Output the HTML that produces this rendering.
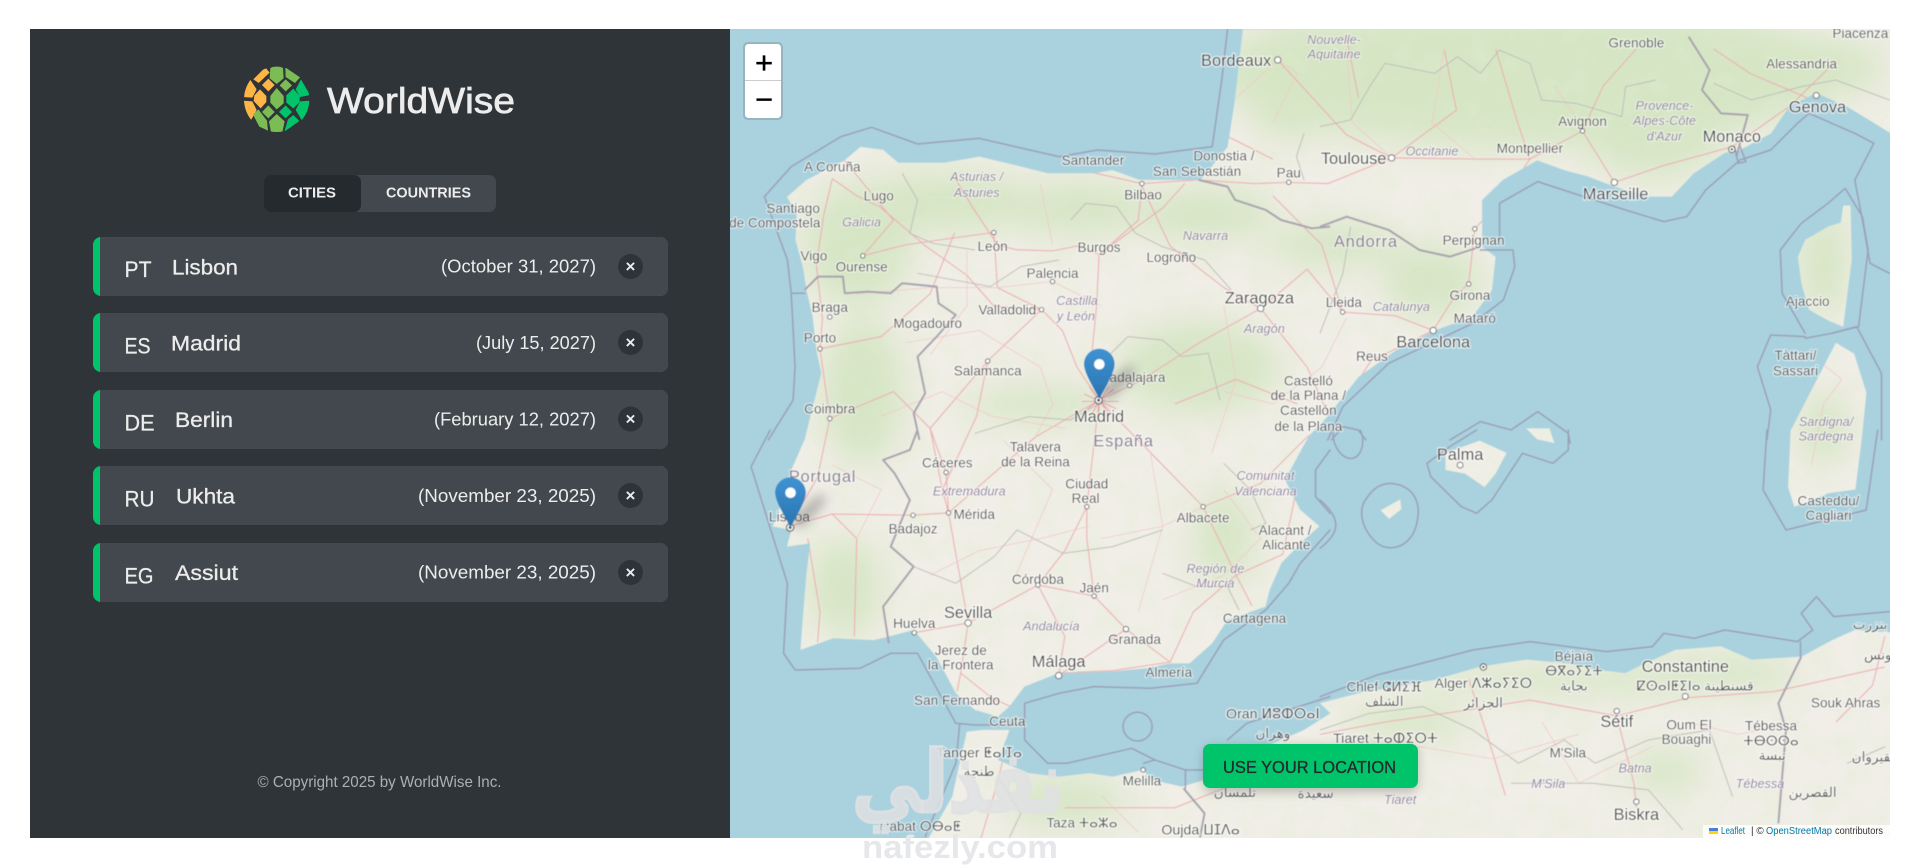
<!DOCTYPE html>
<html lang="en">
<head>
<meta charset="utf-8">
<title>WorldWise</title>
<style>
html,body{margin:0;padding:0;background:#fff;width:1919px;height:866px;overflow:hidden}
svg{display:block}
text{font-family:"Liberation Sans","DejaVu Sans",sans-serif}
.c text{font-size:11.1px;fill:#505050;text-anchor:middle;paint-order:stroke;stroke:rgba(255,255,255,.6);stroke-width:1.8px;stroke-linejoin:round}
.b text{font-size:13.4px;fill:#444;text-anchor:middle;paint-order:stroke;stroke:rgba(255,255,255,.65);stroke-width:2px;stroke-linejoin:round}
.t text{font-size:11.6px;fill:#484848;text-anchor:middle;paint-order:stroke;stroke:rgba(255,255,255,.65);stroke-width:2px;stroke-linejoin:round}
.r text{font-size:10.4px;font-style:italic;fill:#8d7f9e;text-anchor:middle;paint-order:stroke;stroke:rgba(255,255,255,.5);stroke-width:1.6px}
.n text{font-size:13.5px;fill:#847a93;text-anchor:middle;letter-spacing:.6px;paint-order:stroke;stroke:rgba(255,255,255,.5);stroke-width:1.8px}
.mar{fill:none;stroke:#9aa1b8;stroke-width:1.5;vector-effect:non-scaling-stroke;stroke-linejoin:round;stroke-linecap:round}
.bor{fill:none;stroke:#a9a3ae;stroke-width:2;vector-effect:non-scaling-stroke;stroke-linejoin:round}
.reg{fill:none;stroke:#bfbeb9;stroke-width:1;vector-effect:non-scaling-stroke}
.rd{fill:none;stroke:#eeaab0;stroke-width:.85;stroke-linejoin:round}
.rd2{fill:none;stroke:#f2c6c6;stroke-width:.6;stroke-linejoin:round}
.code{font-size:22px;fill:#ececec;stroke:#ececec;stroke-width:.25}
.name{font-size:21.6px;fill:#ececec;stroke:#ececec;stroke-width:.3}
.date{font-size:18.6px;fill:#ececec;text-anchor:end}
.x{font-size:17px;fill:#ececec;font-weight:700;text-anchor:middle}
</style>
</head>
<body>
<svg xmlns="http://www.w3.org/2000/svg" width="1919" height="866" viewBox="0 0 1919 866">
<defs>
<clipPath id="mapclip"><rect x="730" y="29" width="1160" height="809"/></clipPath>
<clipPath id="logoclip"><circle cx="140" cy="148" r="98"/></clipPath>
<clipPath id="landclip">
<path d="M1015.5,24 1009,82 1003,120 981,147 956,147 931,147 909,139 893.6,141.6 856,141.6 834,136 800,128 771.6,133 734,133 721.6,122.5 703,120 690,131 659,147 643,161 651,174 650,196 656,218 659,237 664,259 667,286 671,305 657.5,359 646.5,384 634,425 631,430 646.5,433 643,446.6 662,444 659,468.4 656,504 654,531 681,521.5 715,523 746.6,514.7 765,536.5 781,566.4 796.6,580 815.4,585.5 825,577 837,561 865,550 909,548.7 937,546 956,542 972,542 990.5,525.6 1003,506.5 1034,495.6 1037.4,482 1047,460 1065.6,441 1078,430 1062.4,416.6 1050,392 1069,357 1085,340 1110,308 1141,286 1172,270 1203,259 1219,237 1222,210 1211,201.5 1211,163.4 1228,147 1256,131 1278,139 1297,144 1319,152.5 1347,160.7 1366,160.7 1384,141.6 1409,125 1422,122.5 1447,109 1462,87 1484,76 1509,87 1550,112 1550,20Z"/>
<path d="M1078.5,574.6 1110,566.4 1141,561 1172,555.5 1209.6,544.7 1247,539 1281.4,542 1303,547 1328,550 1344,542 1369,531 1406,528 1431,539 1472,536.5 1497,523 1515.5,514.7 1550,517 1550,700 755,700 759,684.4 778,651 784,623.6 790,597.8 803,596.4 825,596.4 815.4,621 840.4,631.8 865.4,634.5 890.4,631.8 909,634.5 934,629 940.5,637 965.5,642.7 1003,631.8 1034,610 1065.6,596.4 1087,582.8Z"/>
<path d="M1506,168 1512,168 1513,212 1506,267 1494,262 1478,253 1472,232 1469,210 1475,196 1494,185 1504,182Z"/>
<path d="M1500,280 1515,289 1525,321 1521,360 1516,400 1494,403 1482,408 1466,414 1461,398 1463,352Z"/>
<path d="M1181,370 1209,360 1231,370 1222,387 1213,398 1197,387 1181,384Z"/>
<path d="M1247,350 1266,350 1270,362 1256,359Z"/>
<path d="M1128,417 1144,408 1145,416 1135,424Z"/>
</clipPath>
<filter id="bl8" x="-20%" y="-20%" width="140%" height="140%"><feGaussianBlur stdDeviation="13"/></filter>
<filter id="bl4" x="-40%" y="-40%" width="180%" height="180%"><feGaussianBlur stdDeviation="5"/></filter>
<filter id="soft" x="-2%" y="-2%" width="104%" height="104%"><feGaussianBlur stdDeviation=".42"/></filter>
<filter id="mot" x="0" y="0" width="100%" height="100%">
<feTurbulence type="fractalNoise" baseFrequency=".05" numOctaves="3" seed="7"/>
<feColorMatrix values="0 0 0 0 .74  0 0 0 0 .84  0 0 0 0 .64  0 0 0 2.4 -1.05"/>
</filter>
<linearGradient id="pin" x1="0" y1="0" x2="0" y2="1"><stop offset="0" stop-color="#3f93d2"/><stop offset="1" stop-color="#2a73b0"/></linearGradient>
<g id="marker">
<path d="M1,36 L24,15 Q29,13 29,19 L8,41Z" fill="#444" opacity=".5" filter="url(#bl4)" transform="translate(12,0)"/>
<path d="M12.5,0C5.6,0 0,5.6 0,12.5C0,19.5 8.2,32.5 12.5,41C16.8,32.5 25,19.5 25,12.5C25,5.6 19.4,0 12.5,0Z" fill="url(#pin)"/>
<circle cx="12.5" cy="12.6" r="4.3" fill="#fff"/>
</g>
</defs>

<!-- SIDEBAR -->
<rect x="30" y="29" width="700.5" height="809" fill="#2f3439"/>

<!-- logo -->
<g transform="translate(230,50) scale(.3333)" clip-path="url(#logoclip)">
<g fill="#ffb545">
<polygon points="70,88 106,52 119,68 86,99"/>
<polygon points="60,88 80,118 67,143 38,141 44,110"/>
<polygon points="38,152 67,154 80,180 62,212 46,187"/>
<polygon points="90,118 109,138 109,156 92,175 71,153 73,136"/>
<polygon points="115,86 134,105 115,124 96,105"/>
</g>
<g fill="#7cbc55">
<polygon points="140,46 121,54 119,85 140,102 161,85 159,54"/>
<polygon points="166,52 210,82 195,99 167,81"/>
<polygon points="167,88 186,106 167,124 149,106"/>
<polygon points="140,114 161,138 161,160 140,178 121,158 121,138"/>
<polygon points="115,166 134,186 115,205 96,186"/>
<polygon points="69,194 85,178 111,212 114,242 88,230"/>
<polygon points="140,192 164,214 157,247 123,247 117,214"/>
</g>
<g fill="#00c46a">
<polygon points="213,88 240,135 210,141 197,118"/>
<polygon points="190,116 209,138 209,156 190,175 169,158 169,136"/>
<polygon points="240,152 210,154 197,180 215,210 235,186"/>
<polygon points="167,166 186,186 167,205 147,186"/>
<polygon points="208,213 163,245 174,208 190,195"/>
</g>
</g>
<text x="327" y="113" font-size="36" fill="#ececec" stroke="#ececec" stroke-width=".7" textLength="188" lengthAdjust="spacingAndGlyphs">WorldWise</text>

<!-- tabs -->
<rect x="264" y="175" width="232" height="37" rx="7" fill="#42484d"/>
<path d="M271,175H354a7,7 0 0 1 7,7V205a7,7 0 0 1 -7,7H271a7,7 0 0 1 -7,-7V182a7,7 0 0 1 7,-7Z" fill="#242a2e"/>
<text x="288" y="197.5" font-size="14.4" font-weight="700" fill="#ececec" textLength="48" lengthAdjust="spacingAndGlyphs">CITIES</text>
<text x="386" y="197.5" font-size="14.4" font-weight="700" fill="#ececec" textLength="85" lengthAdjust="spacingAndGlyphs">COUNTRIES</text>

<!-- city rows -->
<g>
<rect x="93" y="237" width="575" height="59" rx="8" fill="#00c46a"/><path d="M100,237H660a8,8 0 0 1 8,8V288a8,8 0 0 1 -8,8H100Z" fill="#42484d"/>
<text class="code" x="124.5" y="277" textLength="27" lengthAdjust="spacingAndGlyphs">PT</text>
<text class="name" x="172" y="274.5" textLength="66" lengthAdjust="spacingAndGlyphs">Lisbon</text>
<text class="date" x="596" y="272.5" textLength="155" lengthAdjust="spacingAndGlyphs">(October 31, 2027)</text>
<circle cx="630.5" cy="266.5" r="12.5" fill="#2d3439"/><text class="x" x="630.5" y="272">×</text>
</g>
<g>
<rect x="93" y="313" width="575" height="59" rx="8" fill="#00c46a"/><path d="M100,313H660a8,8 0 0 1 8,8V364a8,8 0 0 1 -8,8H100Z" fill="#42484d"/>
<text class="code" x="124.5" y="353.5" textLength="26" lengthAdjust="spacingAndGlyphs">ES</text>
<text class="name" x="171" y="350.5" textLength="70" lengthAdjust="spacingAndGlyphs">Madrid</text>
<text class="date" x="596" y="349" textLength="120" lengthAdjust="spacingAndGlyphs">(July 15, 2027)</text>
<circle cx="630.5" cy="342.5" r="12.5" fill="#2d3439"/><text class="x" x="630.5" y="348">×</text>
</g>
<g>
<rect x="93" y="390" width="575" height="59" rx="8" fill="#00c46a"/><path d="M100,390H660a8,8 0 0 1 8,8V441a8,8 0 0 1 -8,8H100Z" fill="#42484d"/>
<text class="code" x="124.5" y="430.5" textLength="30" lengthAdjust="spacingAndGlyphs">DE</text>
<text class="name" x="175" y="427" textLength="58" lengthAdjust="spacingAndGlyphs">Berlin</text>
<text class="date" x="596" y="425.5" textLength="162" lengthAdjust="spacingAndGlyphs">(February 12, 2027)</text>
<circle cx="630.5" cy="419" r="12.5" fill="#2d3439"/><text class="x" x="630.5" y="424.5">×</text>
</g>
<g>
<rect x="93" y="466" width="575" height="59" rx="8" fill="#00c46a"/><path d="M100,466H660a8,8 0 0 1 8,8V517a8,8 0 0 1 -8,8H100Z" fill="#42484d"/>
<text class="code" x="124.5" y="506.5" textLength="30" lengthAdjust="spacingAndGlyphs">RU</text>
<text class="name" x="176" y="503.5" textLength="59" lengthAdjust="spacingAndGlyphs">Ukhta</text>
<text class="date" x="596" y="502" textLength="178" lengthAdjust="spacingAndGlyphs">(November 23, 2025)</text>
<circle cx="630.5" cy="495.5" r="12.5" fill="#2d3439"/><text class="x" x="630.5" y="501">×</text>
</g>
<g>
<rect x="93" y="543" width="575" height="59" rx="8" fill="#00c46a"/><path d="M100,543H660a8,8 0 0 1 8,8V594a8,8 0 0 1 -8,8H100Z" fill="#42484d"/>
<text class="code" x="124.5" y="583.5" textLength="29" lengthAdjust="spacingAndGlyphs">EG</text>
<text class="name" x="175" y="580" textLength="63" lengthAdjust="spacingAndGlyphs">Assiut</text>
<text class="date" x="596" y="578.5" textLength="178" lengthAdjust="spacingAndGlyphs">(November 23, 2025)</text>
<circle cx="630.5" cy="572.5" r="12.5" fill="#2d3439"/><text class="x" x="630.5" y="578">×</text>
</g>

<text x="257.5" y="787" font-size="16" fill="#aab0b3" textLength="244" lengthAdjust="spacingAndGlyphs">© Copyright 2025 by WorldWise Inc.</text>

<!-- MAP -->
<g clip-path="url(#mapclip)">
<rect x="730" y="29" width="1160" height="809" fill="#aad2de"/>
<g filter="url(#soft)">

<g transform="scale(1.2239)">
<!-- land -->
<g clip-path="url(#landclip)">
<rect x="590" y="15" width="965" height="690" fill="#f0eee6"/>
<g filter="url(#bl8)" fill="#d2e4bf" opacity=".85">
<ellipse cx="1250" cy="60" rx="260" ry="62"/>
<ellipse cx="1055" cy="65" rx="40" ry="50"/>
<ellipse cx="1350" cy="85" rx="70" ry="60"/>
<ellipse cx="1480" cy="55" rx="60" ry="25"/>
<ellipse cx="770" cy="165" rx="80" ry="24"/>
<ellipse cx="880" cy="170" rx="60" ry="22"/>
<ellipse cx="985" cy="175" rx="55" ry="22"/>
<ellipse cx="1090" cy="200" rx="55" ry="18"/>
<ellipse cx="1170" cy="230" rx="40" ry="30"/>
<ellipse cx="700" cy="200" rx="45" ry="50"/>
<ellipse cx="705" cy="320" rx="34" ry="60"/>
<ellipse cx="980" cy="300" rx="65" ry="38"/>
<ellipse cx="1000" cy="440" rx="24" ry="40"/>
<ellipse cx="690" cy="480" rx="30" ry="40"/>
<ellipse cx="1490" cy="215" rx="20" ry="44"/>
<ellipse cx="1490" cy="350" rx="20" ry="30"/>
<ellipse cx="1280" cy="555" rx="120" ry="11"/>
<ellipse cx="1400" cy="550" rx="70" ry="14"/>
<ellipse cx="870" cy="655" rx="50" ry="20"/>
<ellipse cx="1150" cy="590" rx="50" ry="14"/>
<ellipse cx="1360" cy="630" rx="30" ry="16"/>
<ellipse cx="850" cy="330" rx="60" ry="14"/>
</g>
<rect x="590" y="15" width="965" height="690" filter="url(#mot)" opacity=".3"/>
<!-- roads -->
<g class="rd">
<polyline points="898,327 892,290 896,250 898,208 880,201 860,205 830,204 815,200 795,170 780,145"/>
<polyline points="898,208 925,188 950,170 968,150"/>
<polyline points="898,208 930,180 933,152"/>
<polyline points="812,190 815,235 851,253 807,295 798,340 770,400 775,419"/>
<polyline points="851,253 868,270 880,300 898,327"/>
<polyline points="680,146 700,160 719,169 755,200 790,225 812,250 851,253"/>
<polyline points="673,176 667,217 672,260 670,285 678,342 668,390 645,430"/>
<polyline points="680,146 673,176"/>
<polyline points="705,209 740,200 775,195 812,190"/>
<polyline points="898,327 930,312 980,280 1030,252 1068,220 1097,255 1140,258 1171,270"/>
<polyline points="1171,270 1190,240 1200,232 1205,187 1230,160 1250,130 1293,107 1319,149"/>
<polyline points="1293,107 1310,70 1337,40"/>
<polyline points="1319,149 1360,135 1415,120 1462,87 1500,50"/>
<polyline points="1250,130 1210,130 1137,129 1100,110 1044,49"/>
<polyline points="1137,129 1085,150 1053,149 1025,150 978,147 933,150 893,141"/>
<polyline points="1030,252 1000,235 956,201 933,152"/>
<polyline points="1030,252 1068,300 1088,345 1068,357"/>
<polyline points="1171,270 1120,295 1088,345"/>
<polyline points="1068,357 1030,395 983,414 950,380 898,327"/>
<polyline points="983,414 1010,470 1048,453 1068,360"/>
<polyline points="1010,470 1023,495"/>
<polyline points="1010,470 975,500 956,541"/>
<polyline points="956,541 920,514 894,487 848,478 791,509"/>
<polyline points="920,514 865,552 870,520 848,478"/>
<polyline points="894,487 888,440 888,414 898,327"/>
<polyline points="848,478 870,450 888,414"/>
<polyline points="791,509 775,419 773,386 760,350 807,295"/>
<polyline points="791,509 747,517 715,523"/>
<polyline points="791,509 785,550 782,565"/>
<polyline points="785,550 810,570 825,577 865,550 909,548 956,541"/>
<polyline points="645,430 680,420 746,421 775,419 846,357 898,327"/>
<polyline points="660,440 670,500 668,525"/>
<polyline points="698,520 700,440 680,420"/>
<polyline points="1078.5,600 1131,590 1200,580 1250,572 1321,585 1380,570 1450,565 1540,545"/>
<polyline points="1200,555 1215,600 1230,650"/>
<polyline points="1321,585 1335,640 1337,660"/>
<polyline points="825,596 815,640 800,690"/>
<polyline points="870,660 960,660 1010,640 1070,610"/>
<polyline points="1540,520 1530,560 1500,590"/>
<polyline points="690,131 730,180 705,209"/>
<polyline points="670,285 720,275 760,240 780,190"/>
<polyline points="678,342 730,320 760,350 770,400"/>
<polyline points="960,330 1010,310 1060,330"/>
<polyline points="1040,160 1080,200 1097,255"/>
<polyline points="1000,110 1040,130"/>
<polyline points="1180,40 1190,90 1137,129"/>
<polyline points="1400,40 1430,60 1500,90"/>
<polyline points="1100,30 1110,80"/>
<polyline points="1222,40 1240,100 1250,130"/>
</g>
<g class="rd2">
<polyline points="700,240 760,235 815,235 860,230 900,250"/>
<polyline points="740,280 800,270 850,300 860,330 846,357"/>
<polyline points="1000,320 1040,330 1080,300 1100,260"/>
<polyline points="900,440 950,430 983,414"/>
<polyline points="720,340 770,320 810,340 870,350"/>
<polyline points="760,470 800,450 850,440 890,430"/>
<polyline points="1100,40 1105,100 1137,129"/>
<polyline points="1180,40 1170,100 1205,130"/>
<polyline points="1000,400 1030,440 1000,470 950,490"/>
<polyline points="1040,100 1060,60 1044,49 1010,80"/>
<polyline points="1480,380 1490,330 1505,310 1480,290"/>
<polyline points="1100,640 1160,610 1220,620 1290,600"/>
<polyline points="680,380 720,400 700,440"/>
<polyline points="820,360 860,400 830,470"/>
<polyline points="940,370 950,430 930,500"/>
<polyline points="1000,250 1010,310 990,370"/>
<polyline points="760,290 790,250 790,205"/>
<polyline points="850,150 860,200"/>
<polyline points="1270,70 1290,100"/>
<polyline points="1380,590 1420,600 1470,590"/>
<polyline points="1260,590 1290,640 1350,610"/>
<polyline points="900,650 930,680"/>
</g>
<!-- Madrid web -->
<g stroke="#ea9cab" stroke-width=".8" fill="none">
<path d="M886,322L912,334M910,318L886,336M898,312V340M884,328H914M890,316L906,338M906,316L892,338"/>
</g>
</g>
</g>

<!-- land borders -->
<g transform="translate(730,0) scale(.3827,.3333)">
<polyline class="bor" points="195,870 230,830 295,830 300,880 360,875 420,880 450,850 540,860 545,910 590,945 540,1010 490,1070 510,1180 480,1240 495,1320"/>
<polyline class="bor" points="1225,540 1300,560 1320,600 1400,630 1440,660 1520,685 1568,680"/>
<polyline class="reg" points="450,520 490,600 470,700 530,730 640,750"/>
<polyline class="reg" points="890,660 930,610 1010,620 1060,700 1130,740 1240,780 1310,870"/>
<polyline class="reg" points="960,1100 1040,1010 1130,1020 1180,1070 1250,1060 1280,1200"/>
<polyline class="reg" points="490,820 680,860 760,800 860,780"/>
<polyline class="reg" points="1500,400 1480,470 1500,540"/>
<polyline class="reg" points="640,1300 780,1250 890,1260 980,1200"/>
</g>
<g transform="translate(730,430) scale(.3827,.3333)">
<polyline class="bor" points="490,0 470,60 400,90 430,130 470,210 420,350 480,410 400,530 415,640"/>
<polyline class="reg" points="480,410 590,460 690,380 750,300 870,370 1000,350 1130,300"/>
<polyline class="reg" points="1130,430 1220,470 1300,470 1330,540"/>
<polyline class="reg" points="1290,100 1360,180 1400,280 1360,300"/>
<polyline class="reg" points="700,1040 760,1150 730,1223"/>
<polyline class="bor" points="1185,1075 1240,1150 1228,1223"/>
</g>
<g transform="translate(1320,0) scale(.38197,.3333)">
<polyline class="bor" points="0,680 70,650 180,690 260,750 340,770 420,740"/>
<polyline class="bor" points="965,110 1020,210 1000,270 1050,340 1120,345 1090,470"/>
<polyline class="reg" points="0,380 80,360 130,260 170,190 300,220 360,170 420,220 470,150 550,190 580,300 670,310 790,350 800,260 880,240"/>
<polyline class="reg" points="1030,250 1130,300 1260,260 1350,240 1491,300"/>
<polyline class="reg" points="0,1000 60,820 80,680"/>
</g>
<g transform="translate(1320,430) scale(.38197,.3333)">
<polyline class="bor" points="1260,680 1200,820 1220,900 1200,1180"/>
<polyline class="reg" points="0,900 130,850 270,830 400,900 520,1000 640,930 720,1000 860,930 1020,900 1080,1100"/>
<polyline class="reg" points="500,1060 715,1060 860,1080 950,1200"/>
<polyline class="reg" points="1380,1000 1480,950"/>
</g>

<!-- maritime borders -->
<g transform="translate(730,0) scale(.3827,.3333)">
<polyline class="mar" points="1300,88 1285,240 1260,440 1110,462 960,450 860,470 650,415 490,432 370,382 290,410 160,500 90,590 150,780 160,880 195,880"/>
<polyline class="mar" points="160,880 170,1100 165,1200 100,1320"/>
</g>
<g transform="translate(730,430) scale(.3827,.3333)">
<polyline class="mar" points="105,0 55,110 150,460 140,670 170,720 340,715 420,670 490,670 590,880 640,885 720,885 770,880 770,820 860,790 950,770 1100,775 1220,760 1290,630 1400,540 1460,460 1490,400 1568,300"/>
<polyline class="mar" points="600,885 590,1000 510,1220"/>
<polyline class="mar" points="770,880 770,930 830,1000 880,1000 1050,955 1110,990 1190,1020 1240,1020"/>
<polyline class="mar" points="1190,1020 1190,1075"/>
<polyline class="mar" points="1110,990 1080,1000"/>
<polyline class="mar" points="1300,930 1350,880 1568,800"/>
<ellipse class="mar" cx="1065" cy="890" rx="38" ry="43"/>
<polyline class="mar" points="1568,60 1530,120 1530,200 1568,250"/>
</g>
<g transform="translate(1320,0) scale(.38197,.3333)">
<polyline class="mar" points="420,750 505,750 510,800 480,900 400,970 180,1090 60,1220 20,1320"/>
<polyline class="mar" points="470,720 470,610 570,545 650,575 800,630 900,665 960,650 1010,570 1100,480 1180,450 1250,370 1280,340 1400,400 1450,430 1400,540 1425,690 1440,790 1491,820"/>
<polyline class="mar" points="1085,440 1095,490 1115,485 1100,440"/>
<polyline class="mar" points="1270,1000 1210,880 1205,750 1260,670 1330,610 1375,565 1420,650 1435,750 1410,980 1340,1000"/>
<polyline class="mar" points="1270,1010 1180,1005 1145,1100 1180,1230 1170,1320"/>
<polyline class="mar" points="1470,1320 1470,1120 1405,980 1340,1000 1270,1015"/>
<polyline class="mar" points="340,1320 420,1265 500,1290 570,1235 650,1300 655,1330"/>
<polyline class="mar" points="30,1320 60,1280 100,1290 120,1320"/>
</g>
<g transform="translate(1320,430) scale(.38197,.3333)">
<polyline class="mar" points="1170,0 1160,180 1220,300 1430,240 1460,0"/>
<polyline class="mar" points="650,0 650,60 610,100 530,70 450,210 410,250 370,230 290,140 280,100 340,50 410,0"/>
<path class="mar" d="M35,0C30,50 60,90 85,85C110,80 120,30 105,0"/>
<path class="mar" d="M0,210C60,270 50,310 0,355"/>
<path class="mar" d="M185,160C240,165 265,210 255,270C245,350 185,370 150,340C110,300 95,240 125,200C140,175 160,160 185,160Z"/>
<polyline class="mar" points="0,800 150,735 400,660 550,635 750,665 870,650 900,610 980,625 1060,600 1250,635 1290,600 1260,550 1300,500 1345,560 1491,545"/>
<polyline class="mar" points="1258,635 1258,680"/>
</g>

<!-- labels -->
<g transform="scale(1.2239)">
<g class="n">
<text x="672" y="394">Portugal</text>
<text x="918" y="365">España</text>
<text x="1116" y="202">Andorra</text>
</g>
<g class="r">
<text x="1090" y="36">Nouvelle-</text><text x="1090" y="48">Aquitaine</text>
<text x="798" y="148">Asturias /</text><text x="798" y="161">Asturies</text>
<text x="704" y="185">Galicia</text>
<text x="985" y="196">Navarra</text>
<text x="880" y="249">Castilla</text><text x="879" y="262">y León</text>
<text x="1033" y="272">Aragón</text>
<text x="792" y="405">Extremadura</text>
<text x="1034" y="392">Comunitat</text><text x="1034" y="405">Valenciana</text>
<text x="993" y="468">Región de</text><text x="993" y="480">Murcia</text>
<text x="859" y="515">Andalucía</text>
<text x="1145" y="254">Catalunya</text>
<text x="1170" y="127">Occitanie</text>
<text x="1360" y="90">Provence-</text><text x="1360" y="102">Alpes-Côte</text><text x="1360" y="115">d'Azur</text>
<text x="1492" y="348">Sardigna/</text><text x="1492" y="360">Sardegna</text>
<text x="1336" y="631">Batna</text>
<text x="1265" y="644">M'Sila</text>
<text x="1438" y="644">Tébessa</text>
<text x="1144" y="657">Tiaret</text>
</g>
<g class="b">
<text x="1010" y="54">Bordeaux</text>
<text x="1106" y="134">Toulouse</text>
<text x="1320" y="163">Marseille</text>
<text x="1029" y="248">Zaragoza</text>
<text x="1171" y="284">Barcelona</text>
<text x="898" y="345">Madrid</text>
<text x="791" y="505">Sevilla</text>
<text x="865" y="545">Málaga</text>
<text x="1415" y="116">Monaco</text>
<text x="1485" y="92">Genova</text>
<text x="1193" y="376">Palma</text>
<text x="1337" y="670">Biskra</text>
<text x="1321" y="594">Sétif</text>
<text x="1377" y="549">Constantine</text>
</g>
<g class="t">
<text x="1212" y="562">Alger ⴷⵣⴰⵢⵉⵔ</text>
<text x="1040" y="587">Oran ⵍⵓⵀⵔⴰⵏ</text>
<text x="800" y="619">Tanger ⵟⴰⵏⵊⴰ</text>
<text x="1132" y="607">Tiaret ⵜⴰⵀⵉⵔⵜ</text>
<text x="981" y="682">Oujda ⵡⵊⴷⴰ</text>
</g>
<g class="c">
<text x="893" y="135">Santander</text>
<text x="1000" y="131">Donostia /</text><text x="978" y="144">San Sebastián</text>
<text x="680" y="140">A Coruña</text>
<text x="718" y="164">Lugo</text>
<text x="648" y="174">Santiago</text><text x="633" y="186">de Compostela</text>
<text x="665" y="213">Vigo</text>
<text x="704" y="222">Ourense</text>
<text x="811" y="205">León</text>
<text x="898" y="206">Burgos</text>
<text x="957" y="214">Logroño</text>
<text x="860" y="227">Palencia</text>
<text x="823" y="257">Valladolid</text>
<text x="678" y="255">Braga</text>
<text x="670" y="280">Porto</text>
<text x="758" y="268">Mogadouro</text>
<text x="807" y="307">Salamanca</text>
<text x="678" y="338">Coimbra</text>
<text x="922" y="312">Guadalajara</text>
<text x="934" y="163">Bilbao</text>
<text x="1053" y="145">Pau</text>
<text x="1098" y="251">Lleida</text>
<text x="1205" y="264">Mataró</text>
<text x="1201" y="245">Girona</text>
<text x="1121" y="295">Reus</text>
<text x="1204" y="200">Perpignan</text>
<text x="1250" y="125">Montpellier</text>
<text x="1293" y="103">Avignon</text>
<text x="1337" y="39">Grenoble</text>
<text x="1472" y="56">Alessandria</text>
<text x="1520" y="31">Piacenza</text>
<text x="1477" y="250">Ajaccio</text>
<text x="1467" y="294">Tàttari/</text><text x="1467" y="307">Sassari</text>
<text x="1494" y="413">Casteddu/</text><text x="1494" y="425">Cagliari</text>
<text x="846" y="369">Talavera</text><text x="846" y="381">de la Reina</text>
<text x="774" y="382">Cáceres</text>
<text x="746" y="436">Badajoz</text>
<text x="796" y="424">Mérida</text>
<text x="888" y="399">Ciudad</text><text x="887" y="411">Real</text>
<text x="983" y="427">Albacete</text>
<text x="1050" y="437">Alacant /</text><text x="1051" y="449">Alicante</text>
<text x="747" y="513">Huelva</text>
<text x="848" y="477">Córdoba</text>
<text x="894" y="484">Jaén</text>
<text x="927" y="526">Granada</text>
<text x="1025" y="509">Cartagena</text>
<text x="955" y="553">Almería</text>
<text x="785" y="535">Jerez de</text><text x="785" y="547">la Frontera</text>
<text x="782" y="576">San Fernando</text>
<text x="823" y="593">Ceuta</text>
<text x="933" y="642">Melilla</text>
<text x="1069" y="315">Castelló</text><text x="1069" y="327">de la Plana /</text><text x="1069" y="339">Castellón</text><text x="1069" y="352">de la Plana</text>
<text x="1286" y="540">Béjaïa</text>
<text x="1286" y="552">ⴱⴳⴰⵢⵉⵜ</text>
<text x="1380" y="596">Oum El</text><text x="1378" y="608">Bouaghi</text>
<text x="1447" y="597">Tébessa</text>
<text x="1447" y="609">ⵜⴱⵙⵙⴰ</text>
<text x="1508" y="578">Souk Ahras</text>
<text x="1131" y="565">Chlef ⵛⵍⵉⴼ</text>
<text x="1281" y="619">M'Sila</text>
<text x="884" y="676">Taza ⵜⴰⵣⴰ</text>
<text x="752" y="679">Rabat ⵔⴱⴰⵟ</text>
<text x="1385" y="564">ⵇⵙⴰⵏⵟⵉⵏⴰ قسنطينة</text>
<text x="1131" y="577">الشلف</text>
<text x="1212" y="578">الجزائر</text>
<text x="1286" y="564">بجاية</text>
<text x="1040" y="603">وهران</text>
<text x="800" y="634">طنجة</text>
<text x="1009" y="651">تلمسان</text>
<text x="1075" y="652">سعيدة</text>
<text x="1448" y="621">تبسة</text>
<text x="1481" y="651">القصرين</text>
<text x="1528" y="514">بنزرت</text>
<text x="1532" y="622">القيروان</text>
<text x="1536" y="539">تونس</text>
</g>
<!-- city dots -->
<g fill="#fff" stroke="#6b6b6b" stroke-width=".8">
<circle cx="1044" cy="49" r="2.6"/><circle cx="1137" cy="129" r="2.6"/><circle cx="1319" cy="149" r="2.6"/><circle cx="1030" cy="252" r="2.6"/><circle cx="1171" cy="270" r="2.6"/><circle cx="791" cy="509" r="2.6"/><circle cx="865" cy="552" r="2.6"/><circle cx="1484" cy="78" r="2.4"/><circle cx="1193" cy="380" r="2.4"/>
<circle cx="812" cy="190" r="1.8"/><circle cx="860" cy="230" r="1.8"/><circle cx="851" cy="253" r="1.8"/><circle cx="807" cy="295" r="1.8"/><circle cx="923" cy="315" r="1.8"/><circle cx="933" cy="150" r="1.8"/><circle cx="1053" cy="149" r="1.8"/><circle cx="1097" cy="255" r="1.8"/><circle cx="1200" cy="232" r="1.8"/><circle cx="1205" cy="187" r="1.8"/><circle cx="1293" cy="107" r="1.8"/><circle cx="983" cy="414" r="1.8"/><circle cx="848" cy="478" r="1.8"/><circle cx="894" cy="487" r="1.8"/><circle cx="920" cy="514" r="2.2"/><circle cx="747" cy="517" r="1.8"/><circle cx="746" cy="421" r="1.8"/><circle cx="775" cy="419" r="1.8"/><circle cx="773" cy="386" r="1.8"/><circle cx="888" cy="414" r="1.8"/><circle cx="934" cy="629" r="1.8"/><circle cx="705" cy="209" r="1.8"/><circle cx="670" cy="285" r="1.8"/><circle cx="678" cy="259" r="1.8"/><circle cx="678" cy="342" r="1.8"/><circle cx="1321" cy="581" r="2.2"/><circle cx="1377" cy="569" r="2.4"/><circle cx="1337" cy="655" r="2.2"/>
</g>
<circle cx="1415" cy="122" r="2.6" fill="#fff" stroke="#555" stroke-width=".8"/><circle cx="1415" cy="122" r="1" fill="#555"/>
<circle cx="1212" cy="545" r="2.6" fill="#fff" stroke="#555" stroke-width=".8"/><circle cx="1212" cy="545" r="1" fill="#555"/>
<circle cx="897.6" cy="327" r="3" fill="#fff" stroke="#555" stroke-width=".9"/><circle cx="897.6" cy="327" r="1.2" fill="#555"/>
<circle cx="645.6" cy="431" r="3" fill="#fff" stroke="#555" stroke-width=".9"/><circle cx="645.6" cy="431" r="1.2" fill="#555"/>
<text x="645" y="426" font-size="11.5" fill="#4b4b4b" text-anchor="middle" style="paint-order:stroke;stroke:rgba(255,255,255,.6);stroke-width:1.8px">Lisboa</text>
<use href="#marker" x="885.7" y="285"/>
<use href="#marker" x="633.4" y="390"/>
</g>
</g>

<!-- zoom control -->
<rect x="743" y="42" width="40" height="78" rx="5" fill="#8ba9b3" opacity=".7"/>
<rect x="745" y="44" width="36" height="74" rx="3.5" fill="#fff"/>
<rect x="745" y="80" width="36" height="1" fill="#ccc"/>
<text x="764" y="73" font-size="31" fill="#000" stroke="#000" stroke-width=".35" text-anchor="middle">+</text>
<text x="764" y="110" font-size="31" fill="#000" stroke="#000" stroke-width=".2" text-anchor="middle">−</text>

<!-- location button -->
<rect x="1203" y="746" width="215" height="46" rx="8" fill="#333" opacity=".28" filter="url(#bl4)"/>
<rect x="1203" y="744" width="215" height="44" rx="7" fill="#00c46a"/>
<text x="1223" y="773" font-size="17.6" fill="#242a2e" textLength="173" lengthAdjust="spacingAndGlyphs" stroke="#242a2e" stroke-width=".3">USE YOUR LOCATION</text>

<!-- attribution -->
<rect x="1703" y="825" width="187" height="13" fill="#fff" fill-opacity=".8"/>
<rect x="1709" y="828" width="9" height="3" fill="#4c7be1"/><rect x="1709" y="831" width="9" height="3" fill="#ffd500"/>
<text x="1721" y="834" font-size="10" fill="#0078a8" textLength="24" lengthAdjust="spacingAndGlyphs">Leaflet</text>
<text x="1751" y="834" font-size="10" fill="#333">| ©</text>
<text x="1766" y="834" font-size="10" fill="#0078a8" textLength="66" lengthAdjust="spacingAndGlyphs">OpenStreetMap</text>
<text x="1835" y="834" font-size="10" fill="#333" textLength="48" lengthAdjust="spacingAndGlyphs">contributors</text>
</g>

<!-- watermark -->
<text x="958" y="812" font-size="86" font-weight="700" fill="#dfe0e3" fill-opacity=".82" stroke="#dfe0e3" stroke-opacity=".82" stroke-width="3" text-anchor="middle" style="font-family:'DejaVu Sans',sans-serif" textLength="212" lengthAdjust="spacingAndGlyphs">نفذلي</text>
<text x="862" y="858" font-size="32" font-weight="700" fill="#e6e7ea" textLength="196" lengthAdjust="spacingAndGlyphs">nafezly.com</text>
</svg>
</body>
</html>
